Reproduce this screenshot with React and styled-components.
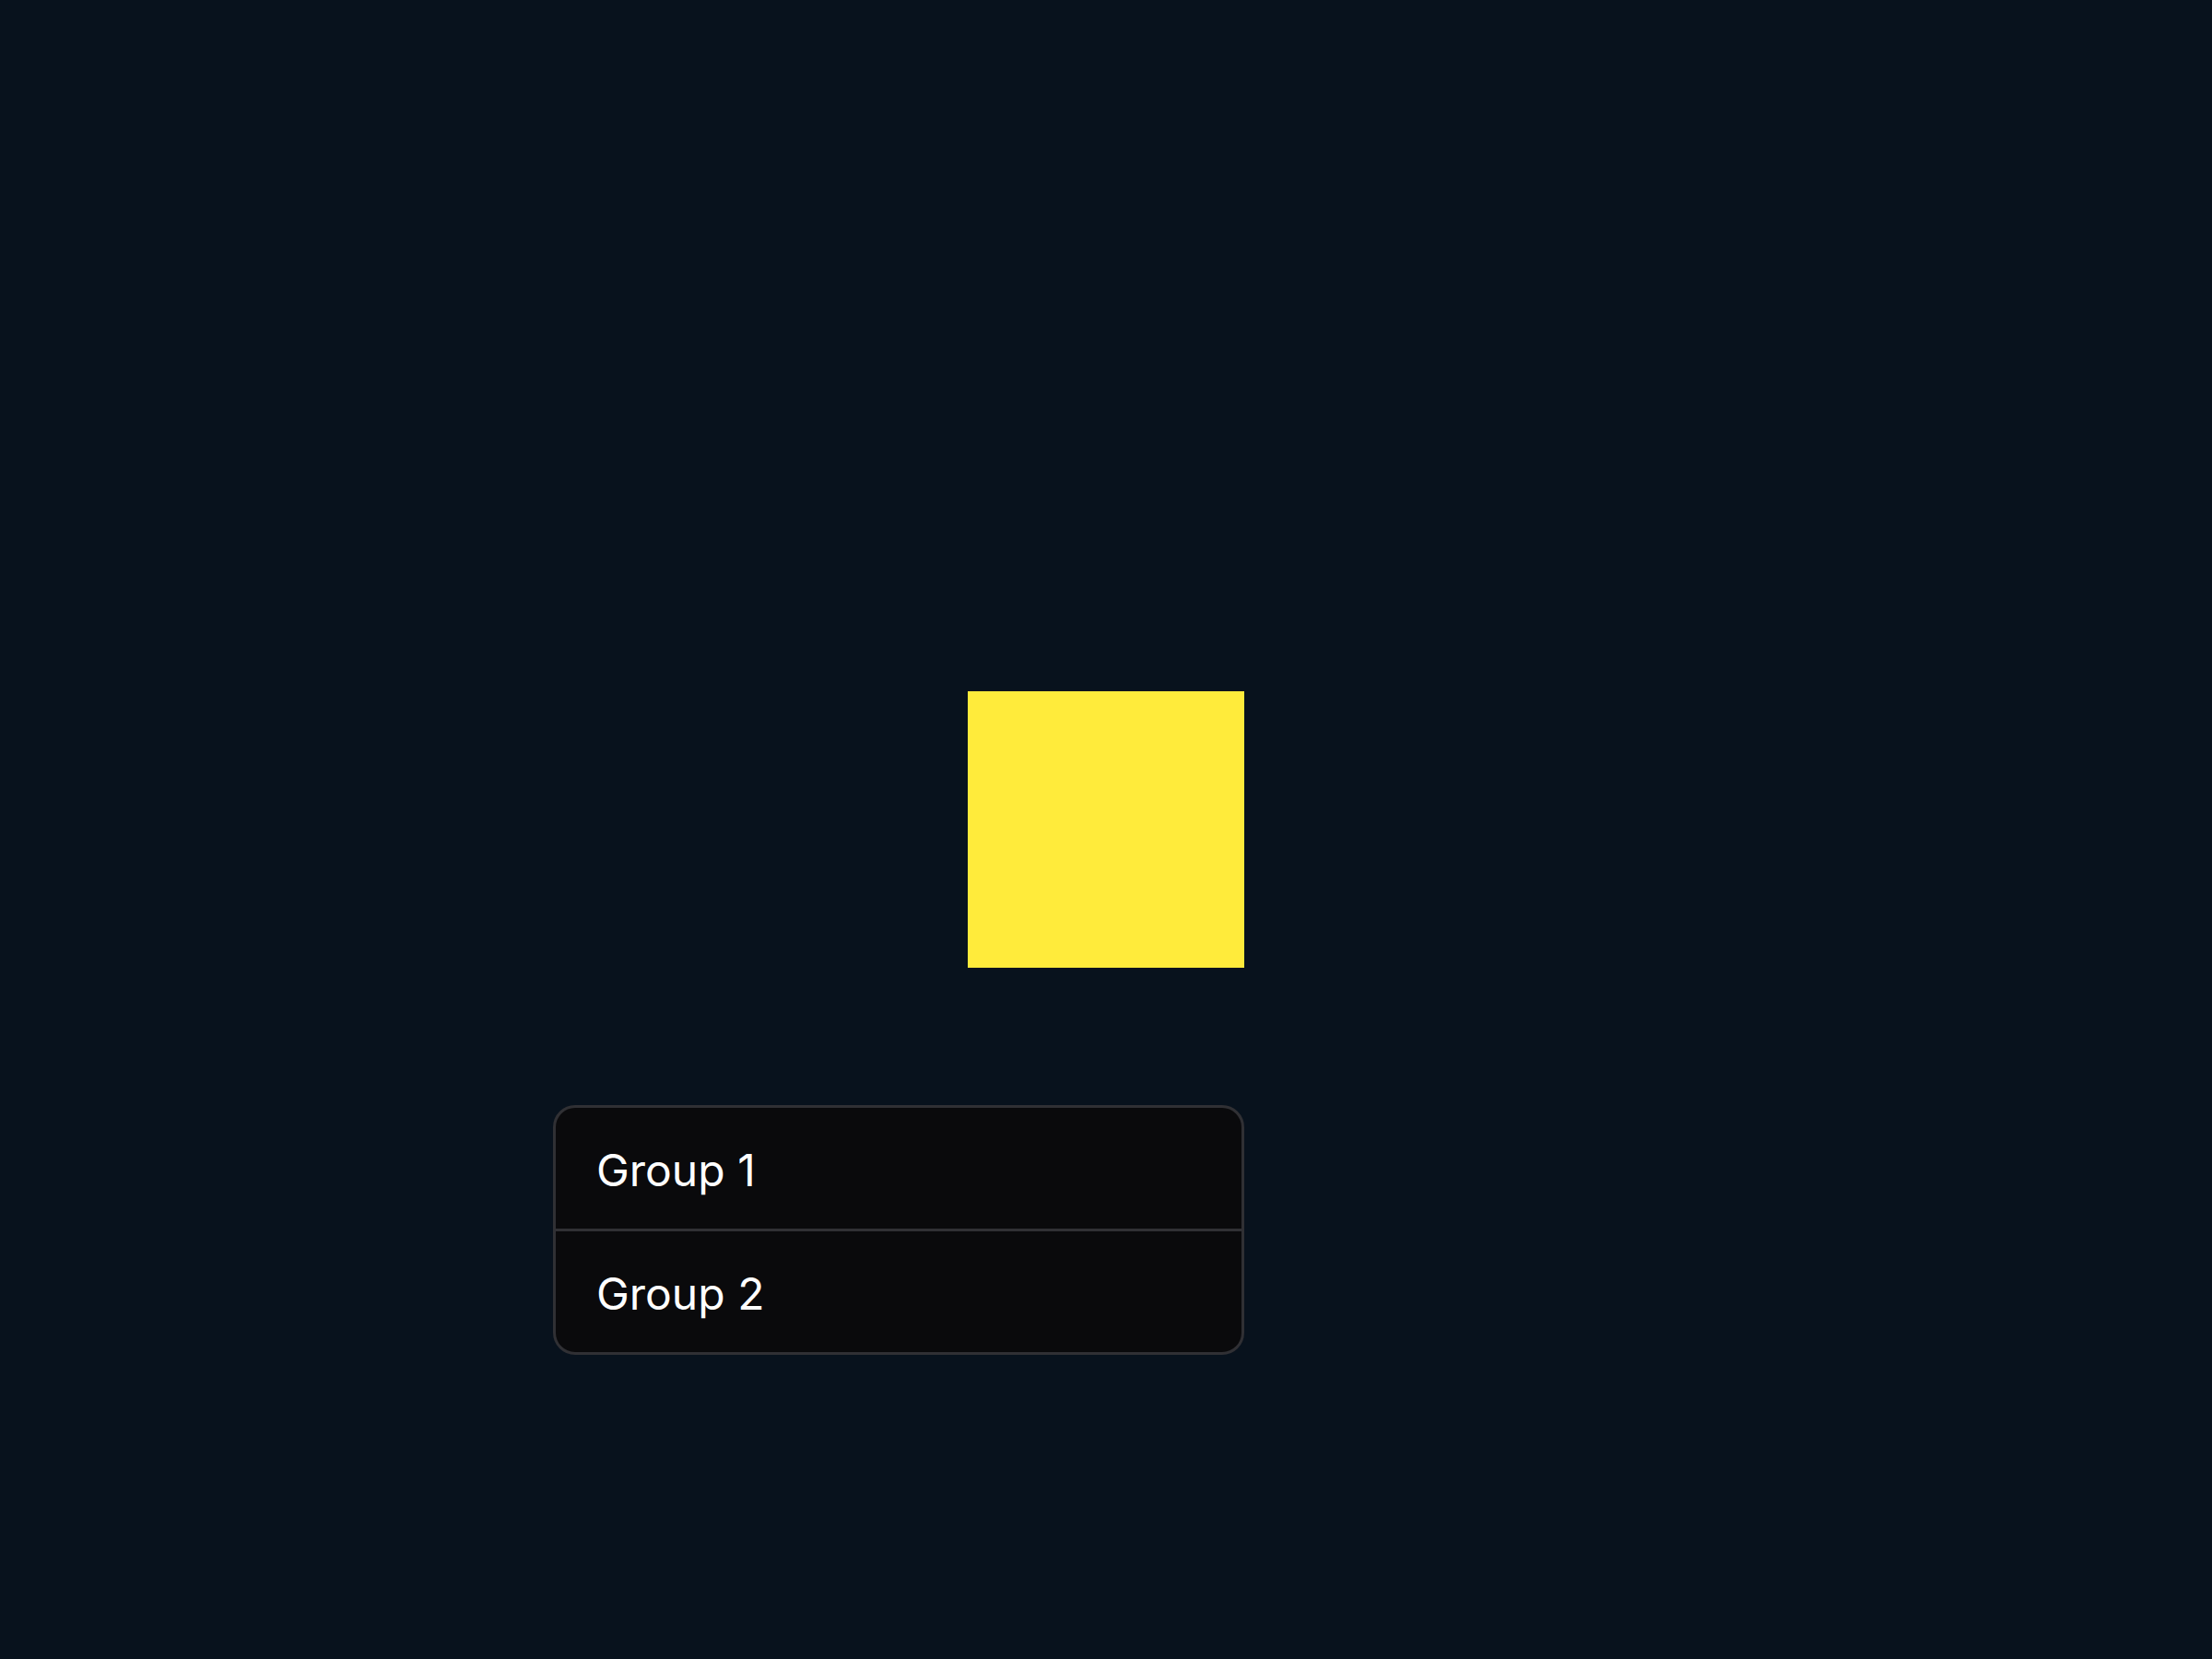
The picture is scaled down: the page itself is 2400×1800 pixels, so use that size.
import React from "react";
import styled, { createGlobalStyle } from "styled-components";

const Global = createGlobalStyle`
  html, body { margin: 0; padding: 0; background: #08121d; }
  body { font-family: Inter, "Noto Sans", sans-serif; }
  #root { min-height: 100vh; }
`;

const Page = styled.main`
  width: 1200px;
  min-height: 1800px;
  margin: 0 auto;
  padding-top: 750px;
  box-sizing: border-box;
  display: flex;
  flex-direction: column;
  gap: 149px;
`;

const Square = styled.div`
  align-self: center;
  width: 300px;
  height: 300px;
  background: #ffeb3b;
`;

const List = styled.ul`
  list-style: none;
  margin: 0;
  padding: 0;
  width: 750px;
  box-sizing: border-box;
  background: #0a0a0c;
  border: 3px solid #303034;
  border-radius: 24px;
  overflow: hidden;
`;

const Row = styled.li`
  height: 131px;
  display: flex;
  align-items: center;
  padding: 0 44px;
  padding-top: 3px;
  box-sizing: border-box;
  color: #ffffff;
  font-size: 48px;
  font-weight: 400;
  & + & { border-top: 3px solid #303034; height: 134px; }
`;

export default function App() {
  const groups = ["Group 1", "Group 2"];
  return (
    <>
      <Global />
      <Page>
        <Square />
        <List>
          {groups.map((g) => (
            <Row key={g}>{g}</Row>
          ))}
        </List>
      </Page>
    </>
  );
}
